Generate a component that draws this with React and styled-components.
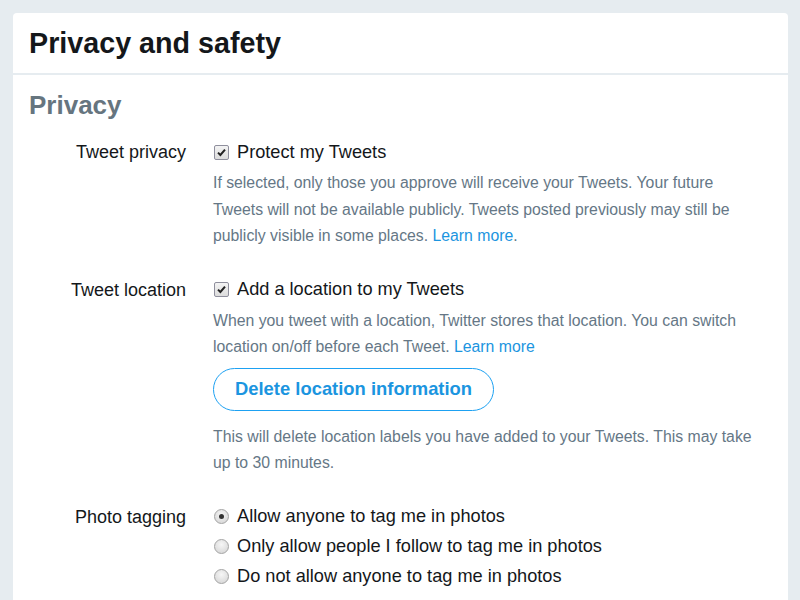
import React from 'react';
import styled, { createGlobalStyle } from 'styled-components';

const GlobalStyle = createGlobalStyle`
  html, body {
    margin: 0;
    padding: 0;
    background: #e6ecf0;
    font-family: "Liberation Sans", Arial, sans-serif;
    color: #14171a;
  }
`;

const Page = styled.div`
  padding: 13px 12px 0 13px;
  height: 600px;
  box-sizing: border-box;
  overflow: hidden;
`;

const Card = styled.div`
  background: #fff;
  border-radius: 4px 4px 0 0;
`;

const Header = styled.div`
  height: 60px;
  display: flex;
  align-items: center;
  padding: 0 16px;
  border-bottom: 2px solid #e6ecf0;
`;

const Title = styled.h1`
  margin: 0;
  font-size: 28.7px;
  font-weight: 700;
  color: #14171a;
`;

const Body = styled.div`
  padding: 15px 16px 40px;
`;

const SectionTitle = styled.h2`
  margin: 0 0 16px;
  font-size: 26px;
  font-weight: 700;
  color: #66757f;
`;

const Row = styled.div`
  display: grid;
  grid-template-columns: 157px 1fr;
  column-gap: 27px;
  margin-bottom: ${p => p.gap || 0}px;
`;

const Label = styled.div`
  text-align: right;
  font-size: 18px;
  line-height: 30px;
  color: #14171a;
`;

const Controls = styled.div`
  display: flex;
  flex-direction: column;
  align-items: flex-start;
`;

const Option = styled.label`
  display: flex;
  align-items: center;
  gap: 8px;
  height: 30px;
  font-size: 18.2px;
  color: #14171a;
`;

const Box = styled.span`
  width: 13px;
  height: 13px;
  border: 1px solid #8f8f9d;
  border-radius: 2px;
  background: linear-gradient(#f4f4f4, #dcdcdc);
  display: inline-flex;
  align-items: center;
  justify-content: center;
  margin-left: 1px;
`;

const Radio = styled.span`
  width: 13px;
  height: 13px;
  border: 1px solid #a4a4a4;
  border-radius: 50%;
  background: radial-gradient(circle at 50% 35%, #f6f6f6, #d2d2d2);
  display: inline-flex;
  align-items: center;
  justify-content: center;
  margin-left: 1px;

  &::after {
    content: '';
    display: ${p => (p.checked ? 'block' : 'none')};
    width: 5px;
    height: 5px;
    border-radius: 50%;
    background: #333;
  }
`;

const Help = styled.p`
  margin: ${p => p.top || 3}px 0 0;
  font-size: 15.8px;
  line-height: 26.5px;
  color: #657786;
  max-width: 546px;
`;

const Link = styled.a`
  color: #1b95e0;
  text-decoration: none;
`;

const OutlineButton = styled.button`
  margin-top: 7px;
  height: 43px;
  padding: 0 21px;
  border: 1px solid #1da1f2;
  border-radius: 22px;
  background: #fff;
  color: #1b95e0;
  font-family: inherit;
  font-size: 18.4px;
  font-weight: 700;
`;

function Check() {
  return (
    <Box>
      <svg width="11" height="11" viewBox="0 0 11 11">
        <path d="M2 5.6 L4.4 8 L9 2.6" fill="none" stroke="#222" strokeWidth="2" />
      </svg>
    </Box>
  );
}

export default function App() {
  return (
    <>
      <GlobalStyle />
      <Page>
        <Card>
          <Header>
            <Title>Privacy and safety</Title>
          </Header>
          <Body>
            <SectionTitle>Privacy</SectionTitle>

            <Row gap={25}>
              <Label>Tweet privacy</Label>
              <Controls>
                <Option>
                  <Check />
                  Protect my Tweets
                </Option>
                <Help>
                  If selected, only those you approve will receive your Tweets. Your future
                  Tweets will not be available publicly. Tweets posted previously may still be
                  publicly visible in some places. <Link href="#">Learn more</Link>.
                </Help>
              </Controls>
            </Row>

            <Row gap={25}>
              <Label>Tweet location</Label>
              <Controls>
                <Option>
                  <Check />
                  Add a location to my Tweets
                </Option>
                <Help>
                  When you tweet with a location, Twitter stores that location. You can switch
                  location on/off before each Tweet. <Link href="#">Learn more</Link>
                </Help>
                <OutlineButton>Delete location information</OutlineButton>
                <Help top={13}>
                  This will delete location labels you have added to your Tweets. This may take
                  up to 30 minutes.
                </Help>
              </Controls>
            </Row>

            <Row>
              <Label>Photo tagging</Label>
              <Controls>
                <Option>
                  <Radio checked />
                  Allow anyone to tag me in photos
                </Option>
                <Option>
                  <Radio />
                  Only allow people I follow to tag me in photos
                </Option>
                <Option>
                  <Radio />
                  Do not allow anyone to tag me in photos
                </Option>
              </Controls>
            </Row>
          </Body>
        </Card>
      </Page>
    </>
  );
}
